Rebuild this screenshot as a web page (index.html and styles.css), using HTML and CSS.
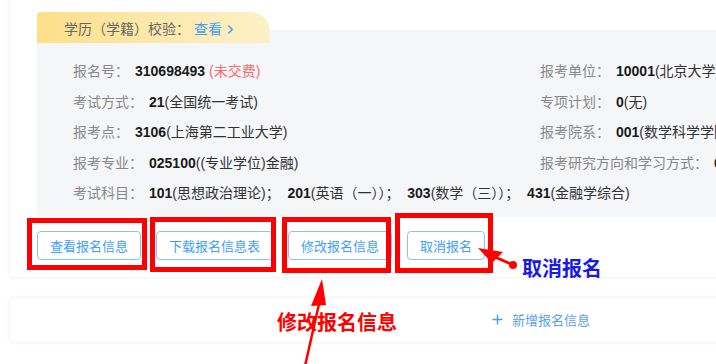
FILE: index.html
```html
<!DOCTYPE html>
<html lang="zh-CN">
<head>
<meta charset="utf-8">
<link rel="stylesheet" href="styles.css">
</head>
<body>
<div class="page">
  <section class="card">
    <div class="tab">学历（学籍）校验：<a class="tab-link">查看<svg class="chev" viewBox="0 0 8 12" width="7" height="11"><path d="M1.5 1.5 L6 6 L1.5 10.5" fill="none" stroke="#409eff" stroke-width="1.8"/></svg></a></div>
    <div class="panel">
      <div class="grid">
        <div class="item"><span class="lab">报名号：</span><b>310698493</b> <span class="red">(未交费)</span></div>
        <div class="item"><span class="lab">报考单位：</span><b>10001</b>(北京大学)</div>
        <div class="item"><span class="lab">考试方式：</span><b>21</b>(全国统一考试)</div>
        <div class="item"><span class="lab">专项计划：</span><b>0</b>(无)</div>
        <div class="item"><span class="lab">报考点：</span><b>3106</b>(上海第二工业大学)</div>
        <div class="item"><span class="lab">报考院系：</span><b>001</b>(数学科学学院)</div>
        <div class="item"><span class="lab">报考专业：</span><b>025100</b>((专业学位)金融)</div>
        <div class="item"><span class="lab">报考研究方向和学习方式：</span><b>00</b>(不区分研究方向)</div>
        <div class="item full"><span class="lab">考试科目：</span><b>101</b>(思想政治理论)；&nbsp; <b>201</b>(英语（一））；&nbsp; <b>303</b>(数学（三））；&nbsp; <b>431</b>(金融学综合)</div>
      </div>
    </div>
    <div class="actions">
      <button class="btn">查看报名信息</button>
      <button class="btn">下载报名信息表</button>
      <button class="btn">修改报名信息</button>
      <button class="btn">取消报名</button>
    </div>
  </section>
  <section class="card add">
    <span class="add-in"><svg viewBox="0 0 12 12" width="11" height="11"><path d="M6 0.5 V11.5 M0.5 6 H11.5" stroke="#409eff" stroke-width="1.5"/></svg>新增报名信息</span>
  </section>
</div>
<div class="overlay">
  <div class="box b1"></div>
  <div class="box b2"></div>
  <div class="box b3"></div>
  <div class="box b4"></div>
  <div class="note note-red">修改报名信息</div>
  <div class="note note-blue">取消报名</div>
  <svg class="arrows" width="716" height="364" viewBox="0 0 716 364">
    <path d="M305 366 L319 304" stroke="#f00" stroke-width="2.5" fill="none"/>
    <polygon points="322,279 311,306 326,305" fill="#f00"/>
    <path d="M495 257 L513 265" stroke="#f00" stroke-width="3" fill="none"/>
    <polygon points="478,248 503,252 492,263" fill="#f00"/>
    <circle cx="513" cy="265" r="4" fill="#f00"/>
  </svg>
</div>
</body>
</html>
```
FILE: styles.css
```css
html, body {
  margin: 0;
  padding: 0;
  background: #fff;
  overflow: hidden;
  width: 716px;
  height: 364px;
}
body {
  position: relative;
  font-family: "Liberation Sans", "Noto Sans CJK SC", sans-serif;
  font-size: 14px;
  color: #222;
}
.page {
  width: 1062px;
  margin-left: 10px;
  margin-top: -10px;
}
.card {
  background: #fff;
  box-shadow: 0 0 4px rgba(0, 0, 0, 0.09);
  border-radius: 3px;
}
.card:first-child {
  padding: 22px 0 17px 27px;
}
.tab {
  position: relative;
  z-index: 1;
  width: 206px;
  height: 31px;
  padding-left: 27px;
  line-height: 32px;
  font-size: 14px;
  color: #666;
  font-family: "Noto Sans CJK SC", sans-serif;
  background: linear-gradient(90deg, #fddf88 0%, #fdeab2 60%, #fdf0c6 100%);
  border-radius: 4px 20px 0 0;
}
.tab-link {
  color: #409eff;
  margin-left: 4px;
}
.chev {
  margin-left: 5px;
  vertical-align: -1px;
}
.panel {
  background: #f5f6f8;
  margin-top: -13px;
  padding: 25px 0 9px 36px;
}
.grid {
  display: grid;
  grid-template-columns: 467px 1fr;
}
.item {
  height: 30.5px;
  line-height: 30.5px;
  white-space: nowrap;
  color: #333;
}
.item b {
  color: #1a1a1a;
}
.lab {
  color: #888;
  margin-right: 6px;
  font-family: "Noto Sans CJK SC", sans-serif;
}
.full {
  grid-column: 1 / 3;
}
.red {
  color: #f56c6c;
}
.actions {
  display: flex;
  gap: 15px;
  margin-top: 14px;
}
.btn {
  height: 29px;
  padding: 0 12px;
  border: 1px solid #8cc0f7;
  border-radius: 4px;
  background: #fff;
  color: #409eff;
  font-family: "Noto Sans CJK SC", sans-serif;
  font-size: 13px;
}
.add {
  margin-top: 21px;
  height: 44px;
  display: flex;
  align-items: center;
  justify-content: center;
}
.add-in {
  display: flex;
  align-items: center;
  gap: 9px;
  color: #5b9def;
  font-family: "Noto Sans CJK SC", sans-serif;
  font-size: 13px;
}
.overlay {
  position: absolute;
  left: 0;
  top: 0;
  width: 716px;
  height: 364px;
  pointer-events: none;
}
.box {
  position: absolute;
  border: 5px solid #f00;
  box-sizing: border-box;
}
.b1 { left: 27px; top: 218px; width: 120px; height: 52px; }
.b2 { left: 150px; top: 217px; width: 126px; height: 55px; }
.b3 { left: 282px; top: 217px; width: 109px; height: 56px; }
.b4 { left: 395px; top: 213px; width: 98px; height: 60px; }
.note {
  position: absolute;
  font-family: "Noto Sans CJK SC", sans-serif;
  font-weight: 700;
  font-size: 20px;
  line-height: 24px;
}
.note-red {
  color: #f00;
  left: 277px;
  top: 310px;
}
.note-blue {
  color: #1a1ae6;
  left: 522px;
  top: 256px;
}
.arrows {
  position: absolute;
  left: 0;
  top: 0;
}
```
